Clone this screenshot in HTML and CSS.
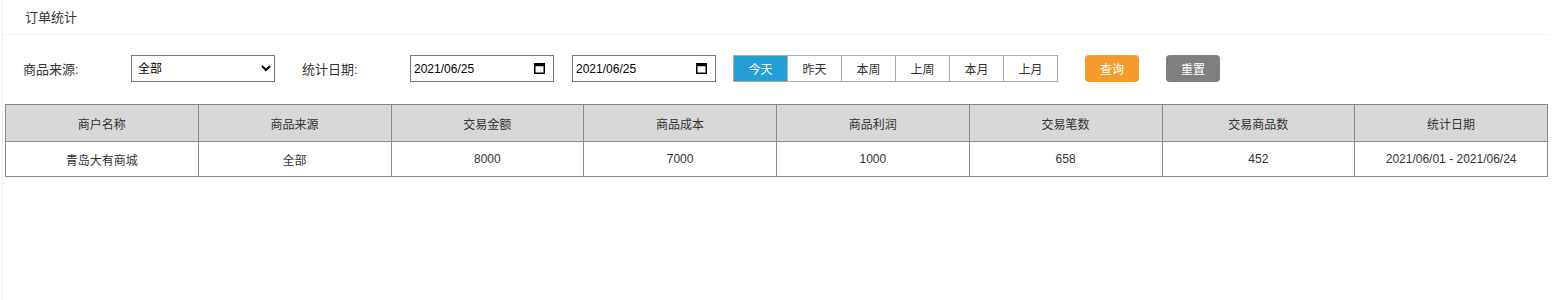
FILE: index.html
```html
<!DOCTYPE html>
<html lang="zh-CN">
<head>
  <meta charset="UTF-8">
  <title>订单统计</title>
  <link rel="stylesheet" href="styles.css">
</head>
<body>

  <div class="page">
    <div class="page-title">订单统计</div>

    <div class="filters">
      <label class="filter-label">商品来源:</label>
      <select class="filter-select">
        <option>全部</option>
        <option>自营</option>
        <option>第三方</option>
      </select>

      <label class="filter-label date-label">统计日期:</label>
      <label class="date-field">
        <input class="date-text" type="text" value="2021/06/25">
        <svg class="cal-icon" width="11" height="11" viewBox="0 0 11 11">
          <rect x="0.75" y="0.75" width="9.5" height="9.5" fill="none" stroke="#000" stroke-width="1.5"/>
          <rect x="0.75" y="0.75" width="9.5" height="2.5" fill="#000"/>
        </svg>
      </label>
      <label class="date-field">
        <input class="date-text" type="text" value="2021/06/25">
        <svg class="cal-icon" width="11" height="11" viewBox="0 0 11 11">
          <rect x="0.75" y="0.75" width="9.5" height="9.5" fill="none" stroke="#000" stroke-width="1.5"/>
          <rect x="0.75" y="0.75" width="9.5" height="2.5" fill="#000"/>
        </svg>
      </label>

      <div class="range-group">
        <button class="range-btn active">今天</button>
        <button class="range-btn">昨天</button>
        <button class="range-btn">本周</button>
        <button class="range-btn">上周</button>
        <button class="range-btn">本月</button>
        <button class="range-btn">上月</button>
      </div>

      <button class="btn btn-query">查询</button>
      <button class="btn btn-reset">重置</button>
    </div>

    <table class="stats">
      <thead>
        <tr>
          <th>商户名称</th>
          <th>商品来源</th>
          <th>交易金额</th>
          <th>商品成本</th>
          <th>商品利润</th>
          <th>交易笔数</th>
          <th>交易商品数</th>
          <th>统计日期</th>
        </tr>
      </thead>
      <tbody>
        <tr>
          <td>青岛大有商城</td>
          <td>全部</td>
          <td>8000</td>
          <td>7000</td>
          <td>1000</td>
          <td>658</td>
          <td>452</td>
          <td>2021/06/01 - 2021/06/24</td>
        </tr>
      </tbody>
    </table>
  </div>

  <script>
    document.querySelectorAll('.range-btn').forEach(btn => {
      btn.addEventListener('click', () => {
        document.querySelectorAll('.range-btn').forEach(b => b.classList.remove('active'));
        btn.classList.add('active');
      });
    });
  </script>

</body>
</html>
```

FILE: styles.css
```css
body {
  margin: 0;
  background: #fff;
  font-family: 'Liberation Sans', 'Noto Sans CJK SC', sans-serif;
  font-size: 12px;
  color: #333;
}

.page {
  margin-left: 2px;
  min-height: 300px;
  border-left: 1px solid #f0f0f0;
  box-sizing: border-box;
}

.page-title {
  height: 35px;
  line-height: 35px;
  padding-left: 22px;
  margin-right: 6px;
  font-size: 13px;
  color: #333;
  border-bottom: 1px solid #f4f4f4;
  box-sizing: border-box;
}

.filters {
  display: flex;
  align-items: center;
  margin-top: 20px;
  padding-left: 20px;
  height: 27px;
}

.filter-label {
  width: 108px;
  font-size: 13px;
  color: #333;
}

.date-label {
  margin-left: 27px;
}

.filter-select,
.date-field {
  width: 144px;
  height: 27px;
  box-sizing: border-box;
  border: 1px solid #767676;
  border-radius: 0;
  background: #fff;
  font-family: 'Liberation Sans', 'Noto Sans CJK SC', sans-serif;
  font-size: 12px;
  color: #000;
}

.filter-select {
  padding: 0 2px;
}

.date-field {
  display: flex;
  align-items: center;
  padding: 0 8px 0 3px;
}

.date-field + .date-field {
  margin-left: 18px;
}

.date-text {
  flex: 1;
  min-width: 0;
  border: none;
  outline: none;
  padding: 0;
  background: transparent;
  font-family: 'Liberation Sans', 'Noto Sans CJK SC', sans-serif;
  font-size: 12px;
  color: #000;
}

.cal-icon {
  flex-shrink: 0;
}

.range-group {
  display: flex;
  margin-left: 17px;
  border: 1px solid #aaa;
  box-sizing: border-box;
  height: 27px;
}

.range-btn {
  width: 54px;
  height: 25px;
  border: none;
  border-left: 1px solid #aaa;
  background: #fff;
  font-family: 'Liberation Sans', 'Noto Sans CJK SC', sans-serif;
  font-size: 12px;
  color: #333;
  padding: 0;
  cursor: pointer;
}

.range-btn:first-child {
  border-left: none;
  width: 53px;
}

.range-btn.active {
  background: #239ed6;
  color: #fff;
}

.btn {
  width: 54px;
  height: 27px;
  border: none;
  border-radius: 4px;
  color: #fff;
  font-family: 'Liberation Sans', 'Noto Sans CJK SC', sans-serif;
  font-size: 12px;
  padding: 0;
  cursor: pointer;
}

.btn-query {
  margin-left: 27px;
  background: #f39b2d;
}

.btn-reset {
  margin-left: 27px;
  background: #7f7f7f;
}

.stats {
  margin: 22px 0 0 2px;
  width: 1543px;
  border-collapse: collapse;
  table-layout: fixed;
}

.stats th,
.stats td {
  border: 1px solid #888;
  text-align: center;
  font-size: 12px;
  font-weight: normal;
  color: #333;
  padding: 0;
}

.stats th {
  height: 36px;
  background: #d8d8d8;
}

.stats td {
  height: 34px;
  background: #fff;
}
```
